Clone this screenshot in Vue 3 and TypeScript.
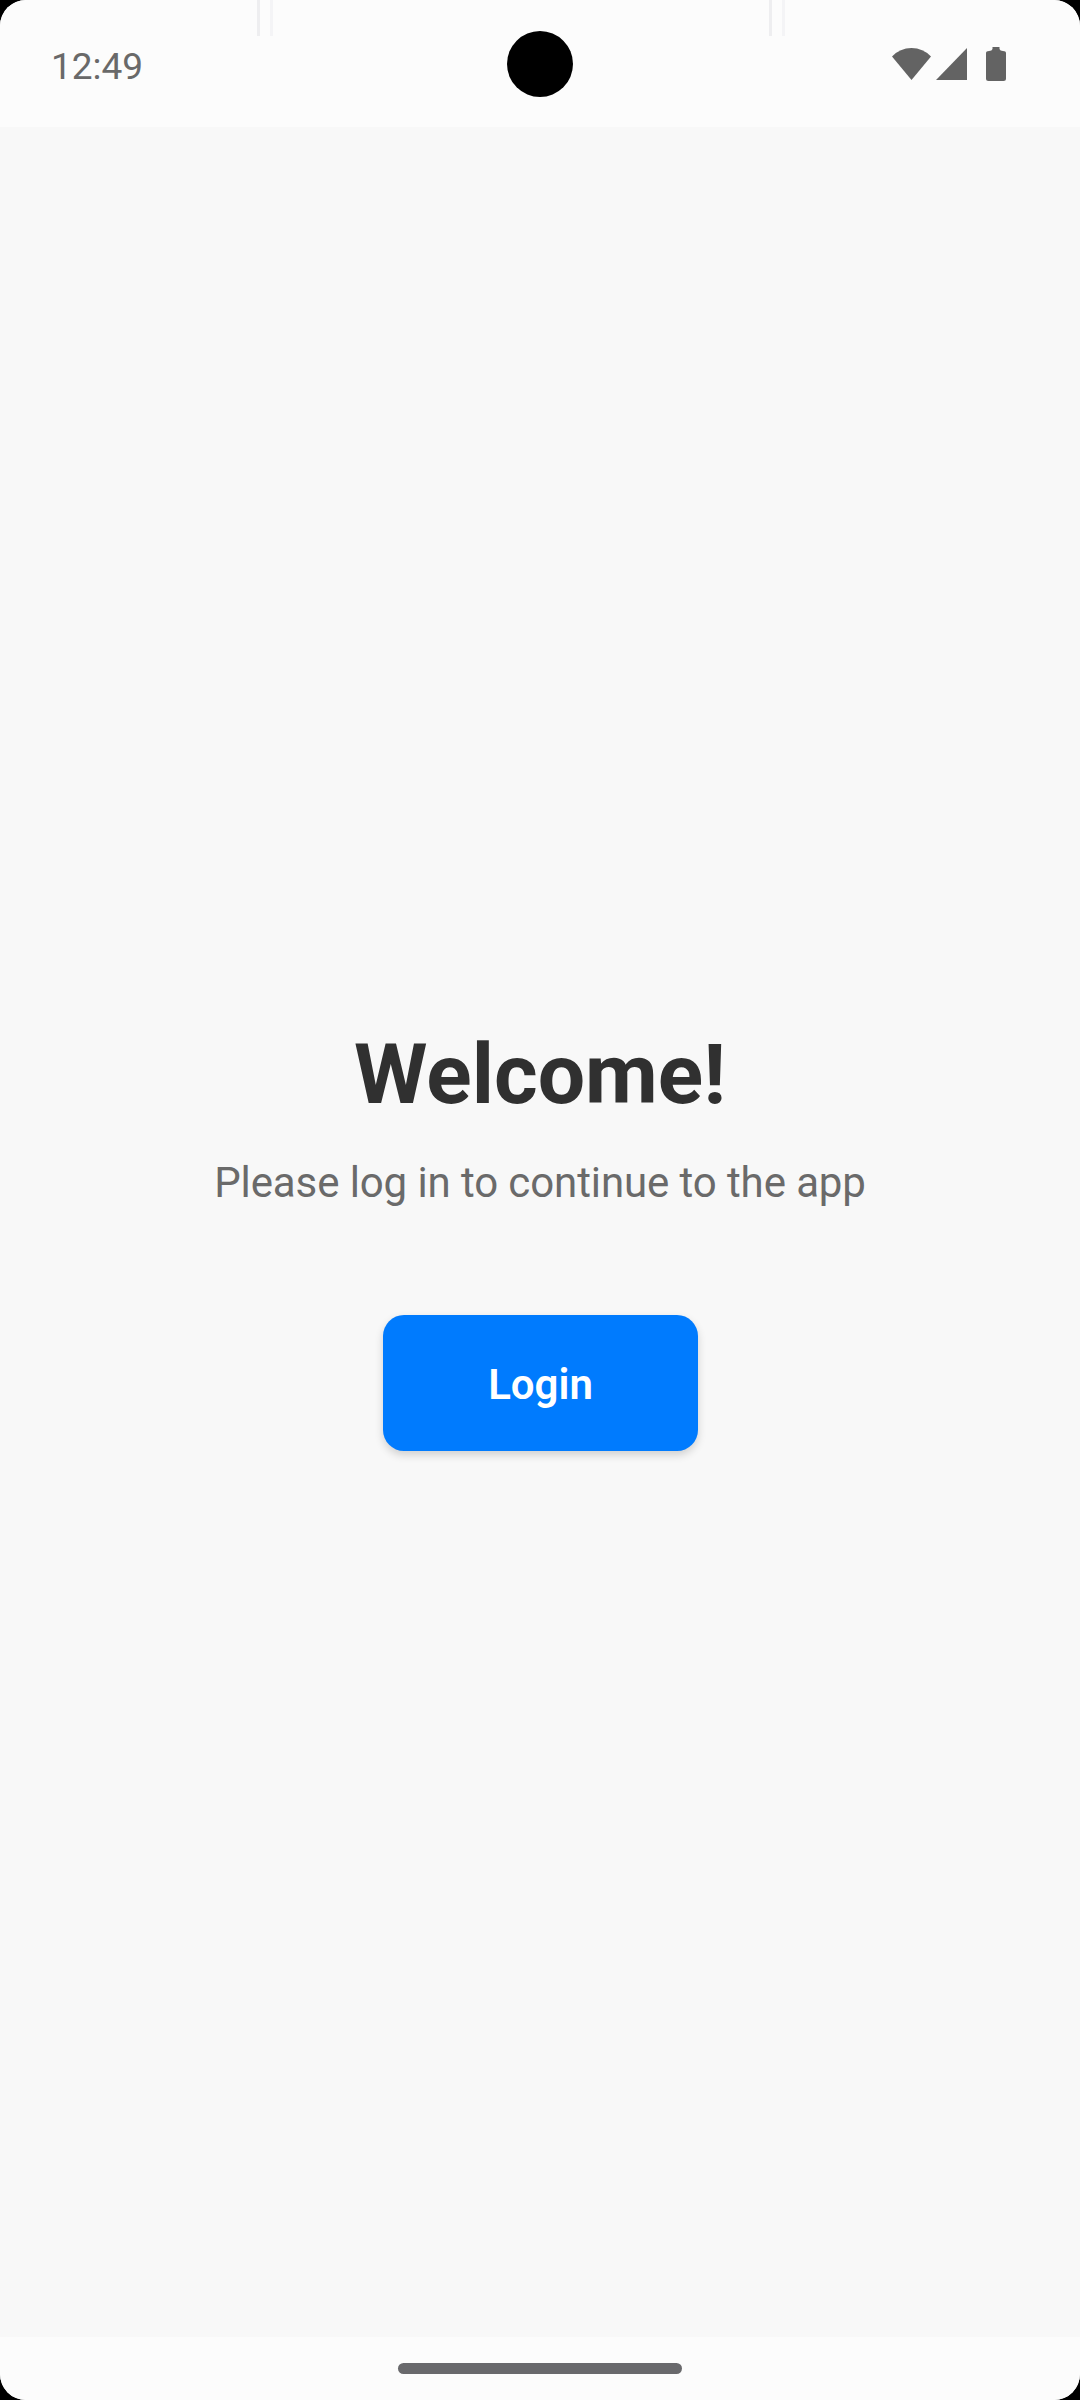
<script setup lang="ts">
const time: string = '12:49'
const title: string = 'Welcome!'
const subtitle: string = 'Please log in to continue to the app'
const action: string = 'Login'
</script>

<template>
  <div class="device">
    <div class="screen">
      <header class="status">
        <span class="time">{{ time }}</span>
        <div class="icons">
          <svg class="wifi" width="39" height="32" viewBox="0 0 39 32">
            <path d="M0 8.5Q8 0 19.5 0T39 8.5L19.5 32Z" />
          </svg>
          <svg class="signal" width="32" height="32" viewBox="0 0 32 32">
            <path d="M31 0V32H0Z" />
          </svg>
          <svg class="battery" width="20" height="34" viewBox="0 0 20 34">
            <path d="M6.5 0H13.5V2Q14 4 17 4Q20 4 20 6V31.5Q20 34 17.5 34H2.5Q0 34 0 31.5V6Q0 4 3 4Q6 4 6.5 2Z" />
          </svg>
        </div>
        <div class="sheet left"></div>
        <div class="sheet middle"></div>
        <div class="sheet right"></div>
        <div class="camera"></div>
      </header>
      <main class="content">
        <h1 class="title">{{ title }}</h1>
        <p class="subtitle">{{ subtitle }}</p>
        <button class="login" type="button">{{ action }}</button>
      </main>
      <footer class="nav"><div class="handle"></div></footer>
    </div>
  </div>
</template>

<style>
body {
  margin: 0;
  background: #000;
}
</style>

<style scoped>
.device {
  width: 1080px;
  height: 2400px;
  background: #000;
  font-family: Roboto, "Liberation Sans", sans-serif;
}
.screen {
  display: flex;
  flex-direction: column;
  height: 100%;
  overflow: hidden;
  border-radius: 26px;
  background: #f8f8f8;
}
.status {
  position: relative;
  display: flex;
  justify-content: space-between;
  box-sizing: border-box;
  flex: none;
  height: 127px;
  padding: 0 74px 0 51px;
  background: #fcfcfc;
}
.time {
  margin-top: 44px;
  font-size: 37px;
  line-height: 46px;
  color: #696969;
}
.icons {
  display: flex;
  align-items: flex-start;
  padding-top: 48px;
  fill: #636363;
}
.signal {
  margin-left: 5px;
}
.battery {
  margin: -1px 0 0 18px;
}
.camera {
  position: absolute;
  top: 31px;
  left: 507px;
  width: 66px;
  height: 66px;
  border-radius: 50%;
  background: #000;
}
.sheet {
  position: absolute;
  top: 0;
  height: 36px;
  box-sizing: border-box;
}
.left {
  left: 0;
  width: 260px;
  border-right: 3px solid #eeeef0;
}
.middle {
  left: 270px;
  width: 502px;
  border-left: 3px solid #f4f4f6;
  border-right: 3px solid #eeeef0;
}
.right {
  left: 782px;
  width: 298px;
  border-left: 3px solid #f4f4f6;
}
.content {
  display: flex;
  flex: 1;
  flex-direction: column;
  align-items: center;
  padding-top: 898px;
}
.title {
  margin: 0;
  font-size: 84px;
  font-weight: 700;
  line-height: 100px;
  color: #303030;
}
.subtitle {
  margin: 33px 0 0;
  font-size: 42px;
  line-height: 50px;
  letter-spacing: -0.1px;
  color: #6a6a6a;
}
.login {
  width: 315px;
  height: 136px;
  margin: 107px 0 0;
  padding: 3px 0 0 1px;
  border: 0;
  border-radius: 21px;
  background: #007bfe;
  box-shadow: 0 4px 8px rgba(0, 0, 0, 0.16);
  color: #fff;
  font: 600 42px/50px Roboto, "Liberation Sans", sans-serif;
}
.nav {
  display: flex;
  flex: none;
  justify-content: center;
  align-items: flex-start;
  box-sizing: border-box;
  height: 63px;
  padding-top: 26px;
  background: #fcfcfc;
}
.handle {
  width: 284px;
  height: 11px;
  border-radius: 6px;
  background: #69696c;
}
</style>
